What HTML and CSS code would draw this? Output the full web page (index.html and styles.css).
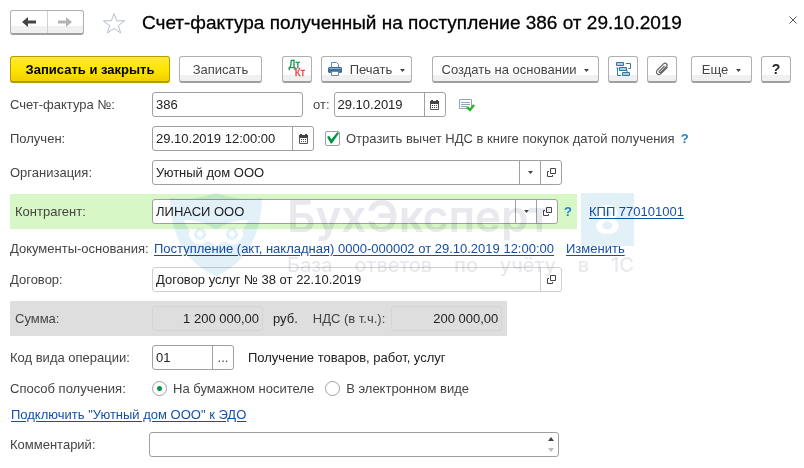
FILE: index.html
```html
<!DOCTYPE html>
<html lang="ru">
<head>
    <meta charset="UTF-8">
    <meta name="viewport" content="width=device-width, initial-scale=1.0">
    <title>Счет-фактура полученный</title>
    <link rel="stylesheet" href="styles.css">
</head>
<body>
    <!-- общие иконки -->
    <svg class="sprite" width="0" height="0">
        <symbol id="calendar" viewBox="0 0 9 10">
            <path d="M.5 1.500h8v8h-8z" fill="#fff" stroke="#555"/>
            <path d="M0 1h9v3H0z M1 0h2v1H1z M6 0h2v1H6z" fill="#444"/>
            <path d="M2 5.500h1M4 5.500h1M6 5.500h1M2 7.500h1M4 7.500h1M6 7.500h1" stroke="#444"/>
        </symbol>
        <symbol id="open" viewBox="0 0 9 9">
            <path d="M3.500 .5h5v5h-5z M2 3.500H.5v5h5V7" fill="none" stroke="#444"/>
        </symbol>
        <symbol id="arrow" viewBox="0 0 5 3">
            <path d="M0 0h5L2.500 3z" fill="#444"/>
        </symbol>
    </svg>

    <header class="header">
        <div class="nav">
            <button type="button" aria-label="Назад">
                <svg width="14" height="10" viewBox="0 0 14 10"><path d="M0 5l6-5v3.500h8v3H6V10z" fill="#444"/></svg>
            </button>
            <button type="button" aria-label="Вперед">
                <svg width="14" height="10" viewBox="0 0 14 10"><path d="M14 5L8 0v3.500H0v3h8V10z" fill="#b4b4b4"/></svg>
            </button>
        </div>
        <button type="button" class="star" aria-label="В избранное">
            <svg width="24" height="22" viewBox="0 0 24 22"><path d="M12 1.500l2.600 7.300h8l-6.300 4.700 2.400 7.500-6.700-4.600L5.300 21l2.400-7.500L1.400 8.800h8z" fill="#fff" stroke="#b4bfc9"/></svg>
        </button>
        <h1>Счет-фактура полученный на поступление 386 от 29.10.2019</h1>
        <button type="button" class="close" aria-label="Закрыть">
            <svg width="8" height="8" viewBox="0 0 8 8"><path d="M.5 .5l7 7M7.500 .5l-7 7" stroke="#555"/></svg>
        </button>
    </header>

    <div class="toolbar">
        <div class="group">
            <button type="button" class="btn primary">Записать и закрыть</button>
            <button type="button" class="btn save">Записать</button>
        </div>
        <div class="group">
            <button type="button" class="btn icon dtkt" aria-label="Проводки">
                <span class="dt">Дт</span><span class="kt">Кт</span>
            </button>
            <button type="button" class="btn print">
                <svg width="14" height="14" viewBox="0 0 14 14">
                    <path d="M3.500 5V.5h5l2 2V5" fill="#fff" stroke="#6a8bab"/>
                    <path d="M1 5h12l1 1v4l-1 1H1l-1-1V6z" fill="#3f6f9f"/>
                    <path d="M1 6.500h12" stroke="#86abd0"/>
                    <path d="M3.500 9.500h7v4h-7z" fill="#fff" stroke="#6a8bab"/>
                </svg>
                Печать
                <svg class="caret" width="5" height="3"><use href="#arrow"/></svg>
            </button>
        </div>
        <div class="group">
            <button type="button" class="btn create">
                Создать на основании
                <svg class="caret" width="5" height="3"><use href="#arrow"/></svg>
            </button>
            <button type="button" class="btn icon" aria-label="Структура подчиненности">
                <svg width="15" height="15" viewBox="0 0 15 15" fill="#a9cbe6" stroke="#39779f">
                    <path d="M.5 .5h7v3h-7z M3.500 5.500h7v3h-7z M6.500 10.500h7v3h-7z"/>
                    <path d="M10 1.500h4.500v5h-2M1.500 6v7.500H5M.5 6h2M11 8v2" fill="none"/>
                </svg>
            </button>
            <button type="button" class="btn icon" aria-label="Присоединенные файлы">
                <svg width="14" height="14" viewBox="0 0 14 14" fill="none" stroke="#666" stroke-width="1.200">
                    <path d="M9.500 4L4.500 9.200c-.8.900.3 1.900 1.200 1.100l5.600-5.700c2-2.200-.8-4.600-2.800-2.700L2.600 7.700c-2.900 3 .8 6.600 3.700 3.700L12.500 5"/>
                </svg>
            </button>
        </div>
        <div class="group right">
            <button type="button" class="btn more">
                Еще
                <svg class="caret" width="5" height="3"><use href="#arrow"/></svg>
            </button>
            <button type="button" class="btn icon help">?</button>
        </div>
    </div>

    <form class="form">
        <div class="row">
            <label class="label" for="number">Счет-фактура №:</label>
            <div class="field number"><input type="text" id="number" value="386"></div>
            <label class="from" for="date">от:</label>
            <div class="field date">
                <input type="text" id="date" value="29.10.2019">
                <button type="button" aria-label="Выбрать дату"><svg width="9" height="10"><use href="#calendar"/></svg></button>
            </div>
            <svg class="status" width="16" height="14" viewBox="0 0 16 14">
                <path d="M.5 1.500h12v9H.5z" fill="#fff" stroke="#8fa5ba"/>
                <path d="M2 4.500h9M2 6.500h9M2 8.500h6" stroke="#8fa5ba"/>
                <path d="M8 9l3 3 4-5" fill="none" stroke="#2db52d" stroke-width="2.500"/>
            </svg>
        </div>

        <div class="row">
            <label class="label" for="received">Получен:</label>
            <div class="field datetime">
                <input type="text" id="received" value="29.10.2019 12:00:00">
                <button type="button" aria-label="Выбрать дату"><svg width="9" height="10"><use href="#calendar"/></svg></button>
            </div>
            <label class="option check">
                <input type="checkbox" checked>
                Отразить вычет НДС в книге покупок датой получения
            </label>
            <a class="hint" href="#">?</a>
        </div>

        <div class="row">
            <label class="label" for="org">Организация:</label>
            <div class="field wide">
                <input type="text" id="org" value="Уютный дом ООО">
                <button type="button" aria-label="Выбрать"><svg width="5" height="3"><use href="#arrow"/></svg></button>
                <button type="button" aria-label="Открыть"><svg width="9" height="9"><use href="#open"/></svg></button>
            </div>
        </div>

        <div class="row">
            <div class="bar partner">
                <label class="label" for="partner">Контрагент:</label>
                <div class="field wide">
                    <input type="text" id="partner" value="ЛИНАСИ ООО">
                    <button type="button" aria-label="Выбрать"><svg width="5" height="3"><use href="#arrow"/></svg></button>
                    <button type="button" aria-label="Открыть"><svg width="9" height="9"><use href="#open"/></svg></button>
                </div>
                <a class="hint" href="#">?</a>
            </div>
            <a class="link kpp" href="#">КПП 770101001</a>
        </div>

        <div class="row docs">
            <span class="label">Документы-основания:</span>
            <a class="link" href="#">Поступление (акт, накладная) 0000-000002 от 29.10.2019 12:00:00</a>
            <a class="link" href="#">Изменить</a>
        </div>

        <div class="row">
            <label class="label" for="contract">Договор:</label>
            <div class="field wide readonly">
                <input type="text" id="contract" value="Договор услуг № 38 от 22.10.2019" readonly>
                <button type="button" aria-label="Открыть"><svg width="9" height="9"><use href="#open"/></svg></button>
            </div>
        </div>

        <div class="row">
            <div class="bar total">
                <label class="label" for="sum">Сумма:</label>
                <div class="field money"><input type="text" id="sum" value="1 200 000,00" readonly></div>
                <span class="currency">руб.</span>
                <label class="vat" for="vat">НДС (в т.ч.):</label>
                <div class="field money"><input type="text" id="vat" value="200 000,00" readonly></div>
            </div>
        </div>

        <div class="row">
            <label class="label" for="code">Код вида операции:</label>
            <div class="field code">
                <input type="text" id="code" value="01">
                <button type="button" aria-label="Выбрать код">...</button>
            </div>
            <span class="code-name">Получение товаров, работ, услуг</span>
        </div>

        <div class="row methods" role="radiogroup" aria-labelledby="method">
            <span class="label" id="method">Способ получения:</span>
            <label class="option"><input type="radio" name="method" checked>На бумажном носителе</label>
            <label class="option"><input type="radio" name="method">В электронном виде</label>
        </div>

        <div class="row edo">
            <a class="link" href="#">Подключить "Уютный дом ООО" к ЭДО</a>
        </div>

        <div class="row comment">
            <label class="label" for="comment">Комментарий:</label>
            <div class="field wide">
                <input type="text" id="comment">
                <div class="spin">
                    <button type="button" aria-label="Вверх"><svg width="6" height="4" viewBox="0 0 6 4"><path d="M0 4h6L3 0z" fill="#444"/></svg></button>
                    <button type="button" aria-label="Вниз"><svg width="6" height="4" viewBox="0 0 6 4"><path d="M0 0h6L3 4z" fill="#bbb"/></svg></button>
                </div>
            </div>
        </div>
    </form>

    <!-- водяной знак поверх формы -->
    <div class="watermark" aria-hidden="true">
        <svg width="92" height="83" viewBox="0 0 92 83">
            <path fill="#e2f0f8" d="M0 5Q24 8 46 0Q68 8 92 5C92 38 78 70 46 83C14 70 0 38 0 5z"/>
            <path fill="#fff" fill-rule="evenodd" d="M14 27Q31 26 46 37Q61 26 78 27Q76 34 72 37Q75 42 71 46Q66 55 56 49Q50 47 46 56Q42 47 36 49Q26 55 21 46Q17 42 20 37Q16 34 14 27z
                M30 35a6 6 0 1 0 .1 0z M62 35a6 6 0 1 0 .1 0z"/>
            <path fill="#fff" d="M30 38a3 3 0 1 0 .1 0z M62 38a3 3 0 1 0 .1 0z"/>
        </svg>
        <div class="brand">
            <div class="brand-top">
                <span class="brand-name">БухЭксперт</span>
                <span class="brand-eight">8</span>
            </div>
            <div class="brand-sub"><span>База</span><span>ответов</span><span>по</span><span>учёту</span><span>в</span><span>1С</span></div>
        </div>
    </div>
</body>
</html>
```
FILE: styles.css
```css
* {
    box-sizing: border-box;
}
body {
    position: relative;
    margin: 0;
    padding: 10px 13px 10px 10px;
    background: #fff;
    color: #444;
    font-family: "Liberation Sans", Arial, sans-serif;
    font-size: 13px;
    line-height: 17px;
}
button, input {
    margin: 0;
    padding: 0;
    font: inherit;
    color: inherit;
}
button {
    display: flex;
    align-items: center;
    justify-content: center;
    border: none;
    background: none;
    cursor: pointer;
}
svg {
    flex: none;
}
.sprite {
    position: absolute;
}

/* шапка */
.header {
    display: flex;
    align-items: center;
    height: 25px;
}
.nav {
    display: flex;
    width: 74px;
    height: 25px;
    border: 1px solid #b0b0b0;
    border-bottom: 2px solid #a0a0a0;
    border-radius: 3px;
    background: linear-gradient(#fff 70%, #f0f0f0 70%);
}
.nav button {
    flex: 1;
}
.nav button + button {
    border-left: 1px solid #d0d0d0;
}
.star {
    margin: 0 16px 0 18px;
}
h1 {
    flex: 1;
    margin: 0;
    color: #000;
    font-size: 19px;
    font-weight: normal;
    line-height: 24px;
    white-space: nowrap;
    -webkit-text-stroke: 0.3px #000;
}
.close {
    align-self: flex-start;
    width: 20px;
    height: 20px;
    margin-right: -12px;
}

/* командная панель */
.toolbar {
    display: flex;
    gap: 14px;
    margin-top: 21px;
}
.group {
    display: flex;
    gap: 9px;
}
.group + .group {
    margin-left: 6px;
}
.toolbar .right {
    margin-left: auto;
}
.btn {
    height: 27px;
    padding: 0 6px;
    border: 1px solid #b0b0b0;
    border-bottom: 2px solid #a0a0a0;
    border-radius: 3px;
    background: linear-gradient(#fff 75%, #f0f0f0 75%);
    white-space: nowrap;
}
.btn svg {
    margin-right: 8px;
}
.btn .caret {
    margin: 2px 0 0 8px;
}
.primary {
    min-width: 160px;
    border-color: #b39b00;
    background: linear-gradient(#ffe83c, #ffe600 50%, #f2cf00);
    color: #000;
    font-weight: bold;
}
.save {
    min-width: 83px;
}
.print {
    width: 91px;
}
.create {
    min-width: 167px;
}
.more {
    min-width: 61px;
}
.icon {
    width: 30px;
    padding: 0;
}
.btn.icon svg {
    margin: 0;
}
.dtkt {
    flex-direction: column;
    font-size: 10px;
    line-height: 8px;
}
.dt {
    padding-right: 5px;
    color: #009646;
    -webkit-text-stroke: 0.3px #009646;
}
.kt {
    padding-left: 6px;
    color: #dc4646;
    -webkit-text-stroke: 0.3px #dc4646;
}
.help {
    color: #222;
    font-size: 14px;
    font-weight: bold;
}

/* форма */
.form {
    display: flex;
    flex-direction: column;
    gap: 9px;
    margin-top: 9px;
}
.row {
    display: flex;
    align-items: center;
    white-space: nowrap;
}
.label {
    flex: none;
    width: 142px;
}
.field {
    display: flex;
    height: 25px;
    border: 1px solid #a0a0a0;
    border-radius: 3px;
    background: #fff;
}
.field input {
    flex: 1;
    min-width: 0;
    padding: 0 3px;
    border: none;
    outline: none;
    background: none;
    color: #222;
}
.field > button {
    width: 21px;
    border-left: 1px solid #a0a0a0;
}
.number {
    width: 151px;
}
.date {
    width: 112px;
}
.datetime {
    width: 162px;
}
.wide {
    flex: 1;
    max-width: 410px;
}
.code {
    width: 82px;
}
.readonly {
    border-color: #d0d0d0;
}
.readonly > button {
    border-color: #d0d0d0;
}
.from {
    margin: 0 4px 0 10px;
}
.status {
    margin-left: 13px;
}
.option {
    display: flex;
    align-items: center;
    gap: 6px;
}
.option input {
    appearance: none;
    width: 15px;
    height: 15px;
    border: 1px solid #a0a0a0;
    background: #fff;
}
.check {
    margin-left: 11px;
}
.check input {
    border-radius: 2px;
}
.check input:checked::before {
    content: "";
    display: block;
    width: 13px;
    height: 12px;
    background: #009646;
    clip-path: polygon(8% 42%, 24% 32%, 42% 60%, 88% 0, 100% 10%, 46% 96%, 36% 96%);
}
.option input[type="radio"] {
    border-radius: 50%;
}
.option input[type="radio"]:checked {
    background: radial-gradient(circle, #009646 2px, #fff 3px);
}
.hint {
    margin-left: 6px;
    color: #1e82c8;
    font-weight: bold;
    text-decoration: none;
}
.link {
    color: #1450aa;
    text-underline-offset: 2px;
}
.bar {
    display: flex;
    align-items: center;
    padding: 5px;
}
.bar .label {
    width: 137px;
}
.partner {
    flex: 1;
    max-width: 567px;
    background: #d7f7c6;
}
.kpp {
    margin-left: 12px;
}
.docs {
    height: 20px;
}
.docs .label {
    width: 144px;
}
.docs .link + .link {
    margin-left: 12px;
}
.total {
    background: #dedede;
}
.money {
    width: 111px;
    border-color: #d4d4d4;
    background: none;
}
.money input {
    text-align: right;
}
.currency {
    margin: 0 15px 0 10px;
    color: #222;
}
.vat {
    margin-right: 6px;
}
.code-name {
    margin-left: 14px;
    color: #222;
}
.methods {
    height: 18px;
}
.methods .option + .option {
    margin-left: 11px;
}
.edo {
    padding-left: 1px;
}
.comment .label {
    width: 139px;
}
.spin {
    display: flex;
    flex-direction: column;
    justify-content: space-between;
    width: 15px;
    padding: 4px 0;
}

/* водяной знак: умножение, чтобы белое оставалось прозрачным */
.watermark {
    position: absolute;
    top: 193px;
    left: 170px;
    display: flex;
    gap: 25px;
    pointer-events: none;
    mix-blend-mode: multiply;
    color: #e8e8ef;
    font-family: Inter, "Open Sans", sans-serif;
    font-weight: 500;
}
.brand {
    width: 347px;
}
.brand-top {
    display: flex;
    justify-content: space-between;
}
.brand-name {
    font-size: 44px;
    font-weight: 600;
    line-height: 46px;
}
.brand-eight {
    width: 53px;
    height: 53px;
    background: #e2f0f8;
    color: #fff;
    font-size: 40px;
    font-weight: bold;
    line-height: 53px;
    text-align: center;
}
.brand-sub {
    display: flex;
    justify-content: space-between;
    margin-top: 7px;
    font-size: 20px;
    line-height: 24px;
}
```
